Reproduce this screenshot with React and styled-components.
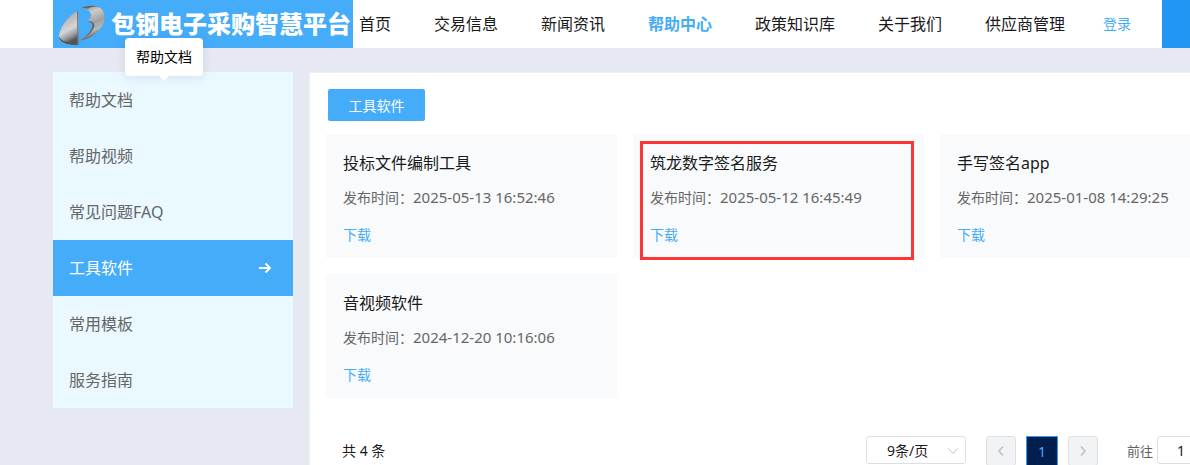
import React, { useState } from 'react';
import styled, { createGlobalStyle } from 'styled-components';

const GlobalStyle = createGlobalStyle`
  * {
    box-sizing: border-box;
  }

  body {
    margin: 0;
    font-family: 'Noto Sans', 'Noto Sans CJK SC', sans-serif;
    font-size: 14px;
    color: #1a1a1a;
  }

  button, input, select {
    font-family: inherit;
  }

  a {
    text-decoration: none;
  }
`

const Page = styled.div`
  height: 100vh;
  overflow: auto;
  scrollbar-width: none;
  background: #e6e9f2;
`

const Header = styled.header`
  display: flex;
  align-items: center;
  min-width: 1247px;
  height: 48px;
  padding-left: 53px;
  background: #ffffff;
`

const Brand = styled.a`
  display: flex;
  align-items: center;
  flex-shrink: 0;
  width: 300px;
  height: 48px;
  margin-right: 6px;
  background: #45acf9;
  color: #ffffff;
`

const BrandName = styled.span`
  font-size: 24px;
  font-weight: 900;
  line-height: 48px;
  white-space: nowrap;
`

const Nav = styled.nav`
  display: flex;
  gap: 43px;
  flex-shrink: 0;
`

const NavLink = styled.a`
  font-size: 16px;
  line-height: 48px;
  font-weight: ${({ $active }) => ($active ? 700 : 400)};
  color: ${({ $active }) => ($active ? '#45acf9' : '#1a1a1a')};
`

const LoginLink = styled.a`
  margin-left: 38px;
  flex-shrink: 0;
  line-height: 48px;
  color: #45acf9;
`

const RegisterButton = styled.button`
  flex: 1;
  height: 48px;
  margin-left: 31px;
  border: 0;
  background: #2196f3;
`

const Content = styled.div`
  display: flex;
  align-items: stretch;
  min-width: 1248px;
  padding: 24px 0 24px 53px;
`

const Sidebar = styled.aside`
  position: relative;
  flex: 0 0 240px;
  align-self: flex-start;
  margin-right: 16px;
  background: #eaf8ff;
`

const SideLink = styled.a`
  display: flex;
  justify-content: space-between;
  height: 56px;
  padding: 0 20px 0 16px;
  font-size: 16px;
  line-height: 56px;
  background: ${({ $active }) => ($active ? '#45acf9' : 'transparent')};
  color: ${({ $active }) => ($active ? '#ffffff' : '#666666')};

  svg {
    align-self: center;
  }
`

const Tooltip = styled.div`
  position: absolute;
  top: -34px;
  left: 72px;
  padding: 9px 11px;
  border-radius: 4px;
  background: #ffffff;
  color: #000000;
  line-height: 20px;
  box-shadow: 0 2px 10px rgba(0, 40, 80, 0.1);

  &::after {
    content: '';
    position: absolute;
    top: 100%;
    left: 34px;
    border: 5px solid transparent;
    border-top-color: #ffffff;
    border-bottom: 0;
  }
`

const Panel = styled.main`
  flex: 1;
  padding: 16px;
  border: 1px solid #ebeef5;
  background: #ffffff;
`

const CategoryButton = styled.button`
  display: block;
  min-width: 97px;
  height: 32px;
  margin: 0 0 13px 2px;
  border: 0;
  border-radius: 2px;
  background: #45acf9;
  color: #ffffff;
  font-size: 14px;
`

const CardGrid = styled.div`
  display: grid;
  grid-template-columns: repeat(3, 1fr);
  gap: 16px;
`

const Card = styled.article`
  position: relative;
  padding: 17px 17px 13px;
  border-radius: 2px;
  background: #f8fafc;
`

const CardTitle = styled.h2`
  margin: 0 0 13px;
  font-size: 16px;
  font-weight: 400;
  line-height: 24px;
`

const CardTime = styled.p`
  margin: 0 0 17px;
  line-height: 20px;
  color: #666666;

  time {
    font-size: 15px;
    line-height: 16px;
  }
`

const DownloadLink = styled.a`
  display: block;
  line-height: 20px;
  color: #45acf9;
`

const Highlight = styled.div`
  position: absolute;
  inset: 7px 10px -2px 7px;
  border: 3px solid #fa3639;
  pointer-events: none;
`

const Pagination = styled.div`
  display: flex;
  align-items: flex-start;
  margin-top: 38px;
  padding: 0 26px 0 16px;
  line-height: 30px;
`

const SizeSelect = styled.div`
  position: relative;
  margin: 0 20px 0 auto;

  svg {
    position: absolute;
    top: 9px;
    right: 7px;
    pointer-events: none;
  }
`

const Select = styled.select`
  display: block;
  width: 100px;
  height: 28px;
  padding: 0 20px;
  border: 1px solid #dcdfe6;
  border-radius: 3px;
  background: #ffffff;
  color: #1a1a1a;
  font-size: 14px;
  appearance: none;
`

const PageButton = styled.button`
  display: flex;
  align-items: center;
  justify-content: center;
  width: ${({ $current }) => ($current ? '32px' : '30px')};
  height: 30px;
  margin-right: 10px;
  padding: 0;
  border: 1px solid ${({ $current }) => ($current ? '#2f9bf5' : '#dcdfe6')};
  border-radius: ${({ $current }) => ($current ? '0' : '3px')};
  background: ${({ $current }) => ($current ? '#001f4d' : '#f2f3f5')};
  color: ${({ $current }) => ($current ? '#45acf9' : '#c0c4cc')};
  font-size: 14px;
`

const Jump = styled.label`
  display: flex;
  gap: 4px;
  margin-left: 19px;
  font-size: 13px;
  color: #606266;
`

const JumpInput = styled.input`
  width: 48px;
  height: 28px;
  padding: 0 3px;
  border: 1px solid #dcdfe6;
  border-radius: 3px;
  color: #1a1a1a;
  font-size: 14px;
  text-align: center;
`

const navItems = ['首页', '交易信息', '新闻资讯', '帮助中心', '政策知识库', '关于我们', '供应商管理'];

const sideItems = ['帮助文档', '帮助视频', '常见问题FAQ', '工具软件', '常用模板', '服务指南'];

const tools = [
  { title: '投标文件编制工具', time: '2025-05-13 16:52:46' },
  { title: '筑龙数字签名服务', time: '2025-05-12 16:45:49', highlighted: true },
  { title: '手写签名app', time: '2025-01-08 14:29:25' },
  { title: '音视频软件', time: '2024-12-20 10:16:06' },
];

const Logo = () => (
  <svg width="58" height="48" viewBox="0 0 174 144" aria-hidden="true">
    <defs>
      <linearGradient id="leaf" x1="0" y1="0" x2="0.3" y2="1">
        <stop offset="0" stopColor="#777777" />
        <stop offset="0.3" stopColor="#b5b5b5" />
        <stop offset="0.65" stopColor="#d3d6d9" />
        <stop offset="0.85" stopColor="#999999" />
        <stop offset="1" stopColor="#555555" />
      </linearGradient>
      <linearGradient id="curl" x1="0" y1="0" x2="0.3" y2="1">
        <stop offset="0" stopColor="#777777" />
        <stop offset="0.3" stopColor="#cccccc" />
        <stop offset="0.6" stopColor="#a0a0a0" />
        <stop offset="0.8" stopColor="#b8b8b8" />
        <stop offset="1" stopColor="#555555" />
      </linearGradient>
    </defs>
    <path d="M76 32C46 46 18 84 18 110C19 127 42 135 76 134Z" fill="url(#leaf)" />
    <path d="M18 110C19 127 42 135 76 134V130C47 131 26 125 18 110Z" fill="#555555" />
    <path d="M72 34L76 32V134H73Z" fill="#777777" />
    <path d="M84 25C99 15 123 15 138 22C151 28 157 43 154 60C149 87 116 119 79 122C98 113 118 94 121 78C122 69 113 64 103 63C112 57 117 49 113 40C108 29 97 25 84 25Z" fill="url(#curl)" />
    <path d="M84 25C99 15 123 15 138 22C124 18 111 21 105 26C98 23 91 24 84 25Z" fill="#666666" />
    <path d="M103 63C115 62 125 67 124 78C121 95 99 114 79 122C99 112 115 94 118 78C119 70 113 66 103 63Z" fill="#666666" />
  </svg>
);

const Arrow = () => (
  <svg width="16" height="16" viewBox="0 0 16 16" fill="none" stroke="currentColor" strokeWidth="1.8" aria-hidden="true">
    <path d="M2 8H13M8.5 3.5L13 8L8.5 12.5" />
  </svg>
);

const Chevron = ({ d, size = 12, strokeWidth = 1.8 }) => (
  <svg width={size} height={size} viewBox="0 0 12 12" fill="none" stroke="#c0c4cc" strokeWidth={strokeWidth} aria-hidden="true">
    <path d={d} />
  </svg>
);

const ToolCard = ({ title, time, highlighted }) => (
  <Card>
    <CardTitle>{title}</CardTitle>
    <CardTime>发布时间：<time>{time}</time></CardTime>
    <DownloadLink href="#">下载</DownloadLink>
    {highlighted && <Highlight />}
  </Card>
);

const App = () => {
  const [pageSize, setPageSize] = useState('9');
  const [target, setTarget] = useState('1');

  return (
    <Page>
      <GlobalStyle />
      <Header>
        <Brand href="#">
          <Logo />
          <BrandName>包钢电子采购智慧平台</BrandName>
        </Brand>
        <Nav>
          {navItems.map((item) => (
            <NavLink href="#" key={item} $active={item === '帮助中心'}>{item}</NavLink>
          ))}
        </Nav>
        <LoginLink href="#">登录</LoginLink>
        <RegisterButton type="button" />
      </Header>
      <Content>
        <Sidebar>
          {sideItems.map((item) => (
            <SideLink href="#" key={item} $active={item === '工具软件'}>
              {item}
              {item === '工具软件' && <Arrow />}
            </SideLink>
          ))}
          <Tooltip role="tooltip">帮助文档</Tooltip>
        </Sidebar>
        <Panel>
          <CategoryButton type="button">工具软件</CategoryButton>
          <CardGrid>
            {tools.map((tool) => (
              <ToolCard key={tool.title} {...tool} />
            ))}
          </CardGrid>
          <Pagination>
            <span>共 4 条</span>
            <SizeSelect>
              <Select aria-label="9条/页" value={pageSize} onChange={(e) => setPageSize(e.target.value)}>
                <option value="9">9条/页</option>
              </Select>
              <Chevron d="M1.5 3.5L6 8.5L10.5 3.5" strokeWidth={1} />
            </SizeSelect>
            <PageButton type="button" disabled>
              <Chevron d="M8 1.5L4 6L8 10.5" />
            </PageButton>
            <PageButton type="button" $current>1</PageButton>
            <PageButton type="button" disabled>
              <Chevron d="M4 1.5L8 6L4 10.5" />
            </PageButton>
            <Jump>
              前往
              <JumpInput value={target} onChange={(e) => setTarget(e.target.value)} />
            </Jump>
          </Pagination>
        </Panel>
      </Content>
    </Page>
  );
};

export default App;
